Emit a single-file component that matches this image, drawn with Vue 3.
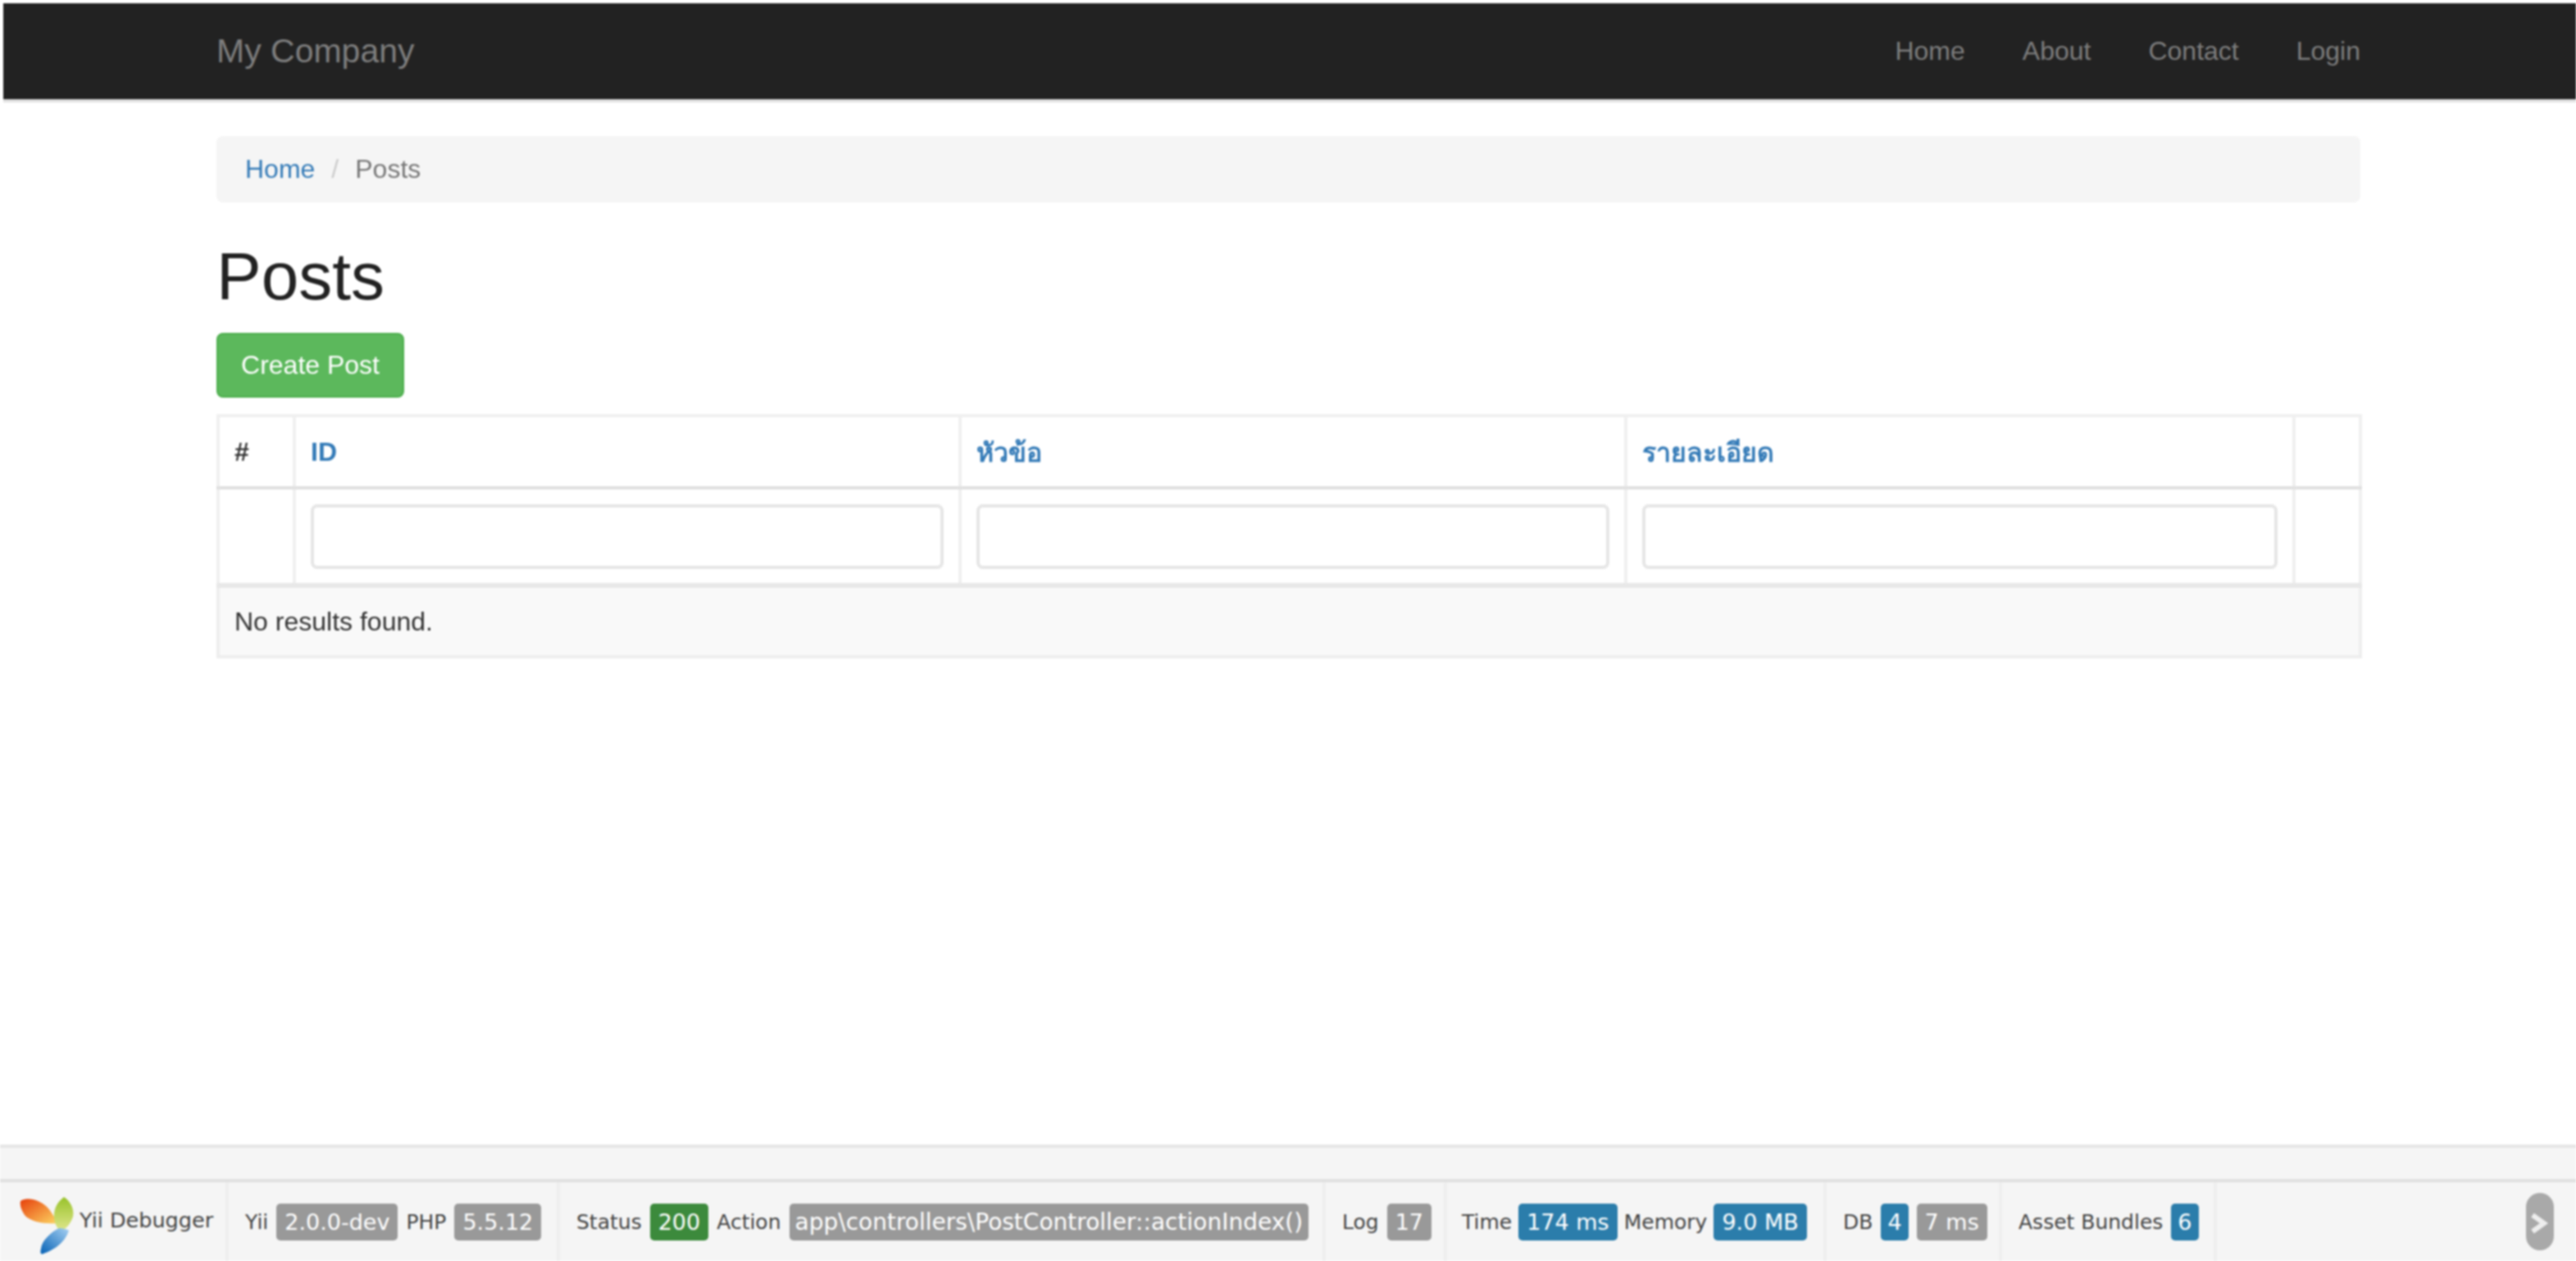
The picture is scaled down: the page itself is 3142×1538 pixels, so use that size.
<script setup>
const nav = ['Home', 'About', 'Contact', 'Login']
</script>

<template>
  <div class="page">
    <header class="navbar">
      <div class="nav-inner">
        <a class="brand">My Company</a>
        <nav class="links"><a v-for="n in nav" :key="n">{{ n }}</a></nav>
      </div>
    </header>
    <main class="container">
      <div class="breadcrumb"><a>Home</a><span class="sep">/</span><span class="cur">Posts</span></div>
      <h1>Posts</h1>
      <button class="btn">Create Post</button>
      <table class="grid">
        <colgroup><col class="c1"><col class="c2"><col class="c3"><col class="c4"><col class="c5"></colgroup>
        <thead>
          <tr class="head"><th class="hash">#</th><th><a>ID</a></th><th><a>หัวข้อ</a></th><th><a>รายละเอียด</a></th><th></th></tr>
          <tr class="filters"><td></td><td><input></td><td><input></td><td><input></td><td></td></tr>
        </thead>
        <tbody><tr class="empty"><td colspan="5">No results found.</td></tr></tbody>
      </table>
    </main>
    <footer class="debug">
      <div class="strip"></div>
      <div class="bar">
        <div class="block b1">
          <svg class="logo" viewBox="0 0 75 78" width="75" height="78">
            <defs>
              <linearGradient id="lo" x1="0" y1="0" x2="1" y2="1"><stop offset="0" stop-color="#e63f0c"/><stop offset="1" stop-color="#fdd562"/></linearGradient>
              <linearGradient id="lg" x1="0" y1="0" x2="0" y2="1"><stop offset="0" stop-color="#98c22a"/><stop offset="1" stop-color="#e2e890"/></linearGradient>
              <linearGradient id="lb" x1="1" y1="0" x2="0" y2="1"><stop offset="0" stop-color="#a6d0f2"/><stop offset="1" stop-color="#0561b5"/></linearGradient>
            </defs>
            <path fill="url(#lo)" d="M5 10C12 4 30 8 40 20C45 27 48 32 50 37C35 38 18 36 10 27C6 21 4 15 5 10Z"/>
            <path fill="url(#lg)" d="M58 5C66 10 71 20 69 29C66 38 60 44 54 48C47 40 44 30 47 20C49 13 54 8 58 5Z"/>
            <path fill="url(#lb)" d="M52 43C58 43 63 45 64 46C60 58 50 68 33 74C29 76 29 72 30 68C31 58 42 48 52 43Z"/>
          </svg>
          <span class="tool-name">Yii Debugger</span>
        </div>
        <div class="block b2"><span>Yii</span><b class="label grey">2.0.0-dev</b><span>PHP</span><b class="label grey">5.5.12</b></div>
        <div class="block b3"><span>Status</span><b class="label green">200</b><span>Action</span><b class="label grey route">app\controllers\PostController::actionIndex()</b></div>
        <div class="block b4"><span>Log</span><b class="label grey">17</b></div>
        <div class="block b5"><span>Time</span><b class="label blue">174 ms</b><span>Memory</span><b class="label blue">9.0 MB</b></div>
        <div class="block b6"><span>DB</span><b class="label blue digit">4</b><b class="label grey">7 ms</b></div>
        <div class="block b7"><span>Asset Bundles</span><b class="label blue digit">6</b></div>
      </div>
      <div class="toggle">
        <svg viewBox="0 0 34 70" width="34" height="70"><path d="M8 27L22 37L8 47" fill="none" stroke="#eee" stroke-width="6"/></svg>
      </div>
    </footer>
  </div>
</template>

<style scoped>
.page { box-sizing: border-box; height: 1538px; padding: 4px 0 0 4px; display: flex; flex-direction: column; font-family: "Liberation Sans", "Noto Sans", sans-serif; color: #333; font-size: 32px; filter: blur(1.1px); overflow: hidden; }
.navbar { height: 117px; background: #222; border-bottom: 4px solid #e2e2e2; flex: none; }
.nav-inner { height: 100%; margin: 0 260px; width: 2615px; display: flex; justify-content: space-between; align-items: center; }
.brand { font-size: 41px; color: #7d7d7d; }
.links { display: flex; gap: 70px; }
.links a { color: #7d7d7d; font-size: 32px; }
.container { margin: 41px 0 0 260px; width: 2615px; flex: 1; }
.breadcrumb { height: 81px; box-sizing: border-box; background: #f5f5f5; border-radius: 8px; padding: 0 35px; display: flex; align-items: center; }
.breadcrumb a { color: #337ab7; }
.sep { color: #ccc; margin: 0 20px; }
.cur { color: #777; }
h1 { margin: 44px 0 0; font-weight: 400; font-size: 82px; line-height: 92px; height: 92px; color: #222; }
.btn { display: block; margin-top: 23px; width: 229px; height: 79px; border: 2px solid #4cae4c; border-radius: 8px; background: #5cb85c; color: #fff; font: 400 32px "Liberation Sans", sans-serif; padding: 0; }
.grid { margin-top: 20px; width: 2613px; table-layout: fixed; border-collapse: collapse; border: 4px solid #eee; }
.c1 { width: 93px; } .c2 { width: 812px; } .c3 { width: 812px; } .c4 { width: 815px; } .c5 { width: 81px; }
.grid th, .grid td { border: 4px solid #f0f0f0; padding: 0 18px; text-align: left; }
.grid a { color: #337ab7; }
.head { height: 88px; }
.head th { border-bottom: 4px solid #e0e0e0; font-size: 32px; font-weight: 700; font-family: "Liberation Sans", "Noto Sans", "DejaVu Sans", sans-serif; }
.hash { color: #333; }
.filters { height: 119px; }
.filters td { border-bottom: 6px solid #e8e8e8; }
.filters input { display: block; box-sizing: border-box; width: 100%; height: 79px; border: 4px solid #e6e6e6; border-radius: 8px; background: #fff; }
.empty { height: 87px; background: #f9f9f9; }
.empty td { font-size: 32px; border: 0; }
.debug { position: relative; margin-left: -4px; flex: none; background: #f5f5f5; color: #444; font-family: "DejaVu Sans", sans-serif; font-size: 25px; }
.strip { height: 38px; border-top: 4px solid #e6e6e6; border-bottom: 4px solid #e0e0e0; }
.bar { display: flex; height: 96px; }
.block { box-sizing: border-box; display: flex; align-items: center; gap: 10px; padding-left: 20px; border-right: 4px solid #eee; height: 100%; white-space: nowrap; }
.b1 { width: 279px; } .b2 { width: 404px; } .b3 { width: 934px; } .b4 { width: 148px; } .b5 { width: 463px; } .b6 { width: 214px; } .b7 { width: 262px; }
.b1 { padding-left: 20px; gap: 2px; padding-bottom: 4px; }
.b5 { padding-left: 18px; gap: 8px; }
.tool-name { font-size: 25.5px; }
.logo { flex: none; margin-top: 12px; }
.label { height: 45px; line-height: 45px; border-radius: 5px; padding: 0 10px; color: #fff; font-size: 27px; font-weight: 400; }
.digit { padding: 0 8px; }
.route { font-size: 28px; padding: 0 7px; letter-spacing: 0; }
.grey { background: #999; }
.green { background: #3c8a3c; }
.blue { background: #2b7dab; }
.toggle { position: absolute; right: 27px; top: 59px; width: 34px; height: 70px; border-radius: 17px; background: #a9a9a9; }
.toggle svg { display: block; }
</style>

<style>
html, body { background: #fff; }
</style>
